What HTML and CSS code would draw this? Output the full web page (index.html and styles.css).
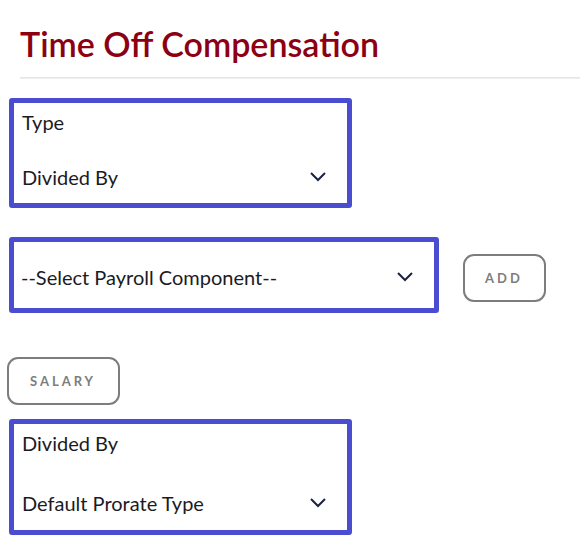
FILE: index.html
```html
<!DOCTYPE html>
<html>

<head>
    <title>Time Off Compensation</title>
    <link rel="stylesheet" href="styles.css">
</head>

<body>
    <div class="page">
        <h1 class="title">Time Off Compensation</h1>
        <hr class="rule">

        <div class="field field-type">
            <label class="field-label">Type</label>
            <div class="field-value">
                <span>Divided By</span>
                <svg class="chevron" width="18" height="12" viewBox="0 0 18 12"><path d="M2 2 L9 9 L16 2" fill="none" stroke="#1c2340" stroke-width="2"/></svg>
            </div>
        </div>

        <div class="row">
            <div class="field field-select">
                <div class="field-value">
                    <span>--Select Payroll Component--</span>
                    <svg class="chevron" width="18" height="12" viewBox="0 0 18 12"><path d="M2 2 L9 9 L16 2" fill="none" stroke="#1c2340" stroke-width="2"/></svg>
                </div>
            </div>
            <button class="btn btn-add">ADD</button>
        </div>

        <button class="btn btn-salary">SALARY</button>

        <div class="field field-prorate">
            <label class="field-label">Divided By</label>
            <div class="field-value">
                <span>Default Prorate Type</span>
                <svg class="chevron" width="18" height="12" viewBox="0 0 18 12"><path d="M2 2 L9 9 L16 2" fill="none" stroke="#1c2340" stroke-width="2"/></svg>
            </div>
        </div>
    </div>
</body>

</html>
```

FILE: styles.css
```css
body {
    margin: 0;
    background: #ffffff;
    font-family: Lato, "Open Sans", sans-serif;
    color: #1b1b24;
}

.page {
    padding-top: 23px;
}

.title {
    margin: 0 0 0 20px;
    font-size: 34px;
    font-weight: 600;
    color: #8c0012;
    line-height: 42px;
}

.rule {
    margin: 12px 0 0 20px;
    border: 0;
    border-top: 1px solid #e4e4e4;
    border-bottom: 1px solid #f0f0f0;
    height: 0;
}

.field {
    box-sizing: border-box;
    margin-left: 9px;
    border: 5px solid #4a4dd0;
    border-radius: 3px;
    font-size: 20px;
}

.field-label {
    display: block;
    padding: 7px 0 0 8px;
    line-height: 24px;
}

.field-value {
    display: flex;
    align-items: center;
    justify-content: space-between;
    padding: 0 20px 0 8px;
    line-height: 24px;
}

.chevron {
    display: block;
}

.field-type {
    margin-top: 19px;
    width: 343px;
    height: 110px;
}

.field-type .field-value {
    margin-top: 31px;
}

.row {
    display: flex;
    align-items: center;
    margin-top: 29px;
}

.field-select {
    width: 430px;
    height: 76px;
    display: flex;
    align-items: center;
}

.field-select .field-value {
    flex: 1;
    padding: 4px 20px 0 7px;
}

.btn {
    box-sizing: border-box;
    background: #ffffff;
    border: 2px solid #7d7d7d;
    border-radius: 11px;
    font-family: Lato, sans-serif;
    font-weight: 700;
    font-size: 13px;
    letter-spacing: 3px;
    color: #7d7d7d;
    height: 48px;
}

.btn-add {
    margin: 6px 0 0 24px;
    width: 83px;
    padding-left: 5px;
}

.btn-salary {
    display: block;
    margin: 44px 0 0 7px;
    width: 113px;
    padding-left: 5px;
}

.field-prorate {
    margin-top: 14px;
    width: 343px;
    height: 116px;
}

.field-prorate .field-value {
    margin-top: 36px;
}
```
